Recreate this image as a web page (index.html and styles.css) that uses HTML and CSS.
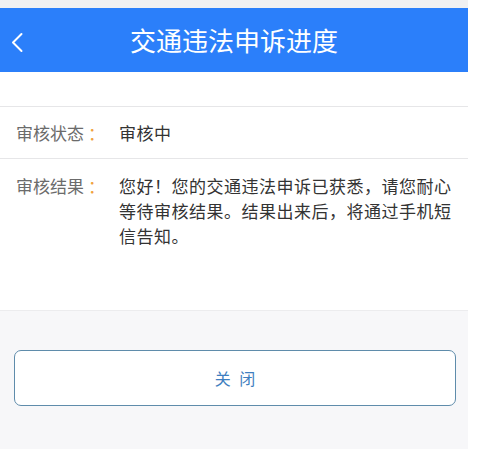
FILE: index.html
```html
<!DOCTYPE html>
<html lang="zh-CN">
<head>
<meta charset="utf-8">
<title>交通违法申诉进度</title>
<link rel="stylesheet" href="styles.css">
</head>
<body>
<div class="app">
  <div class="statusbar"></div>
  <header class="header">
    <div class="back">
      <svg width="16" height="22" viewBox="0 0 16 22"><path d="M12.5 3 L4 11.5 L12.5 20" fill="none" stroke="#fff" stroke-width="2" stroke-linecap="round" stroke-linejoin="round"/></svg>
    </div>
    <h1 class="title">交通违法申诉进度</h1>
    <div></div>
  </header>
  <div class="spacer"></div>
  <div class="row">
    <div class="label">审核状态<span class="colon">：</span></div>
    <div class="value">审核中</div>
  </div>
  <div class="row row-last">
    <div class="label">审核结果<span class="colon">：</span></div>
    <div class="value">您好！您的交通违法申诉已获悉，请您耐心等待审核结果。结果出来后，将通过手机短信告知。</div>
  </div>
  <div class="footer">
    <button class="close-btn">关 闭</button>
  </div>
</div>
</body>
</html>
```
FILE: styles.css
```css
html, body {
  margin: 0;
  padding: 0;
  background: #ffffff;
}
body {
  font-family: "Noto Sans CJK SC", "Noto Sans", sans-serif;
  width: 493px;
  height: 449px;
  overflow: hidden;
}
.app {
  width: 468px;
  height: 449px;
  display: flex;
  flex-direction: column;
  background: #ffffff;
}
.statusbar {
  height: 8px;
  background: #f1f1f2;
}
.header {
  height: 64px;
  background: #2b7ffa;
  display: grid;
  grid-template-columns: 1fr auto 1fr;
  align-items: center;
}
.back {
  padding-left: 9px;
  padding-top: 3px;
  display: flex;
  align-items: center;
  height: 100%;
  box-sizing: border-box;
}
.title {
  margin: 0;
  font-size: 26px;
  font-weight: 400;
  color: #ffffff;
  line-height: 34px;
}
.spacer {
  height: 34px;
  border-bottom: 1px solid #e6e6e8;
}
.row {
  display: flex;
  padding: 13px 0 13px 16px;
  border-bottom: 1px solid #e6e6e8;
  font-size: 17px;
  line-height: 25px;
}
.row-last {
  padding-top: 14px;
  flex: 0 0 152px;
  box-sizing: border-box;
  border-bottom: 1px solid #ececee;
}
.label {
  color: #6b6b6b;
  flex: 0 0 auto;
  width: 103px;
  white-space: nowrap;
}
.colon {
  color: #f0a340;
  margin-left: 4px;
}
.value {
  color: #333333;
  letter-spacing: 0.5px;
  width: 340px;
}
.footer {
  flex: 1;
  background: #f7f7f9;
  padding: 39px 12px 0 14px;
}
.close-btn {
  display: block;
  width: 100%;
  height: 56px;
  background: #ffffff;
  border: 1.5px solid #5f8cab;
  border-radius: 7px;
  color: #3f7fc0;
  font-family: "Noto Sans CJK SC", "Noto Sans", sans-serif;
  font-size: 16px;
  word-spacing: 5px;
  padding: 0;
}
```
